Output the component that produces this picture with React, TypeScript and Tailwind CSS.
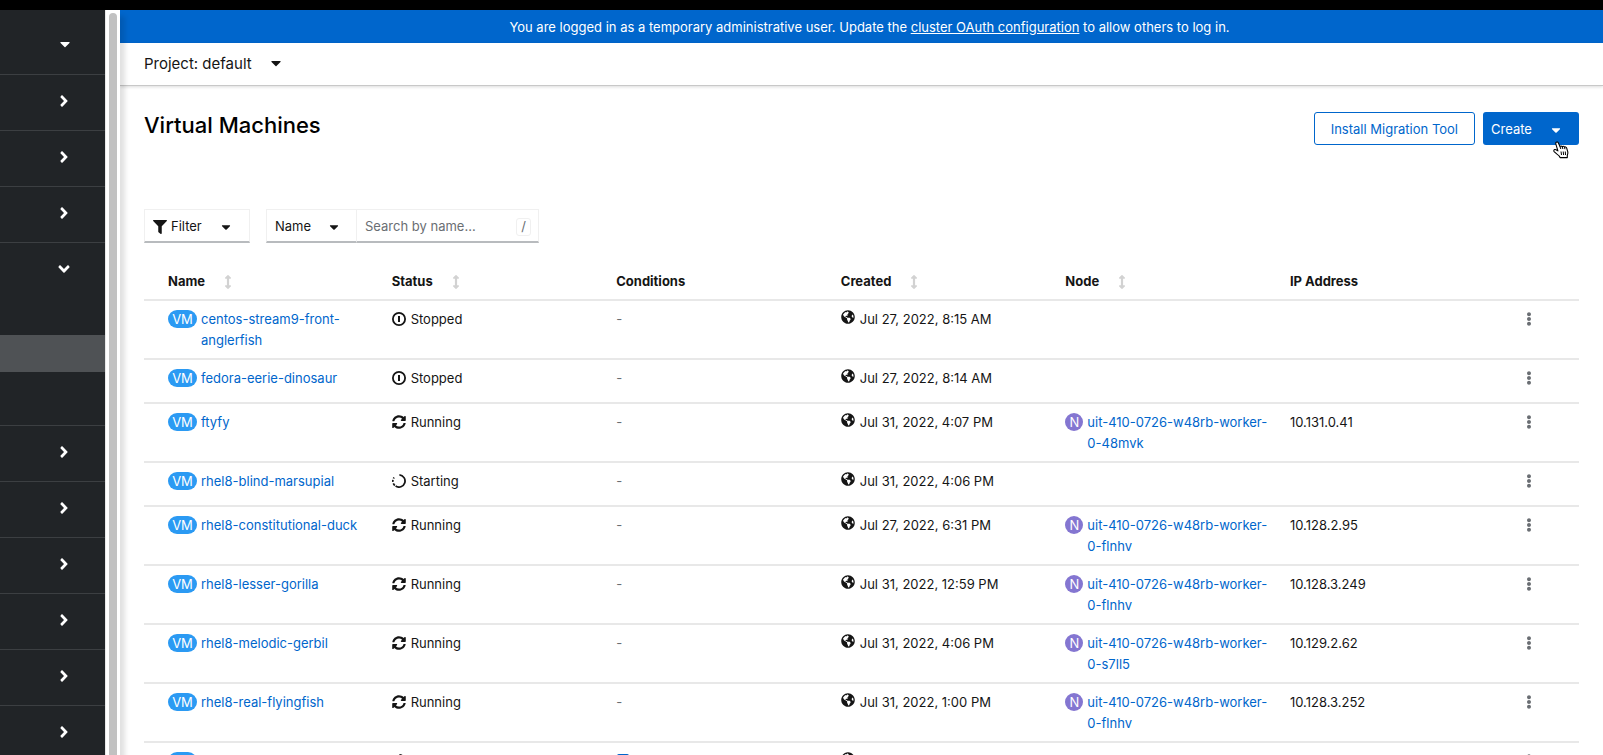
import { useState, type ReactNode } from 'react';
import {
  FaAngleDown,
  FaAngleRight,
  FaArrowsAltV,
  FaCaretDown,
  FaEllipsisV,
  FaFilter,
  FaGlobeAmericas,
  FaSyncAlt,
} from 'react-icons/fa';

type Status = 'Stopped' | 'Running' | 'Starting';

interface VirtualMachine {
  name: string;
  status: Status;
  flagged?: boolean;
  created: string;
  node?: string;
  ip?: string;
}

const machines: VirtualMachine[] = [
  { name: 'centos-stream9-front-anglerfish', status: 'Stopped', created: 'Jul 27, 2022, 8:15 AM' },
  { name: 'fedora-eerie-dinosaur', status: 'Stopped', created: 'Jul 27, 2022, 8:14 AM' },
  { name: 'ftyfy', status: 'Running', created: 'Jul 31, 2022, 4:07 PM', node: 'uit-410-0726-w48rb-worker-0-48mvk', ip: '10.131.0.41' },
  { name: 'rhel8-blind-marsupial', status: 'Starting', created: 'Jul 31, 2022, 4:06 PM' },
  { name: 'rhel8-constitutional-duck', status: 'Running', created: 'Jul 27, 2022, 6:31 PM', node: 'uit-410-0726-w48rb-worker-0-flnhv', ip: '10.128.2.95' },
  { name: 'rhel8-lesser-gorilla', status: 'Running', created: 'Jul 31, 2022, 12:59 PM', node: 'uit-410-0726-w48rb-worker-0-flnhv', ip: '10.128.3.249' },
  { name: 'rhel8-melodic-gerbil', status: 'Running', created: 'Jul 31, 2022, 4:06 PM', node: 'uit-410-0726-w48rb-worker-0-s7ll5', ip: '10.129.2.62' },
  { name: 'rhel8-real-flyingfish', status: 'Running', created: 'Jul 31, 2022, 1:00 PM', node: 'uit-410-0726-w48rb-worker-0-flnhv', ip: '10.128.3.252' },
  { name: '', status: 'Starting', created: '', flagged: true },
];

function StoppedIcon() {
  return (
    <svg viewBox="0 0 14 14" className="mt-[3px] size-[14px]" fill="none" stroke="currentColor" aria-hidden="true">
      <circle cx="7" cy="7" r="6.1" strokeWidth="1.8" />
      <path d="M7 4v6" strokeWidth="2" />
    </svg>
  );
}

function StartingIcon() {
  return (
    <svg viewBox="0 0 14 14" className="mt-[3px] size-[14px]" fill="none" stroke="currentColor" aria-hidden="true">
      <path d="M7.4 .9A6.1 6.1 0 1 1 3.6 12.1" strokeWidth="1.8" />
      <path d="M2.8 11.500A6.1 6.1 0 0 1 1.3 9.4M.9 7.800A6.1 6.1 0 0 1 .95 5.900M1.5 4.500A6.1 6.1 0 0 1 2.1 3.400" strokeWidth="1.7" />
    </svg>
  );
}

const statusIcons: Record<Status, ReactNode> = {
  Stopped: <StoppedIcon />,
  Running: <FaSyncAlt className="mt-[3px] size-[14px]" aria-hidden="true" />,
  Starting: <StartingIcon />,
};

function NavSection({ open = false }: { open?: boolean }) {
  return (
    <li className="border-b border-[#3c3f42]">
      <button type="button" aria-expanded={open} className="flex h-[55px] w-full items-center justify-end pr-8 pb-1 text-white">
        {open ? <FaAngleDown className="size-[18px]" /> : <FaAngleRight className="size-[18px]" />}
      </button>
      {open && (
        <ul className="pb-4">
          <li><a href="#" className="block h-[37px]" /></li>
          <li><a href="#" className="block h-[37px] bg-[#4f5255]" /></li>
          <li><a href="#" className="block h-[37px]" /></li>
        </ul>
      )}
    </li>
  );
}

function Sidebar() {
  return (
    <aside className="relative z-10 flex w-[120px] shrink-0 overflow-visible bg-white shadow-[5px_6px_5px_rgba(3,3,3,0.12)]">
      <nav className="h-full flex-1 overflow-hidden bg-[#212427]">
        <button type="button" className="flex h-[65px] w-full items-center justify-end border-b border-[#3c3f42] pt-1 pr-8 text-white">
          <FaCaretDown className="size-4" />
        </button>
        <ul>
          <NavSection />
          <NavSection />
          <NavSection />
          <NavSection open />
          <NavSection />
          <NavSection />
          <NavSection />
          <NavSection />
          <NavSection />
          <NavSection />
        </ul>
      </nav>
      <div className="flex w-[15px] overflow-hidden border-l border-[#e8e8e8] pt-[3px] pl-[3px]">
        <div className="h-full w-2 rounded-t-full bg-[#c1c1c1]" />
      </div>
    </aside>
  );
}

function HeaderCell({ label, sortable = false, className = '' }: { label: string; sortable?: boolean; className?: string }) {
  return (
    <th scope="col" className={`px-2 pt-1 text-left align-middle font-bold ${className}`}>
      {sortable ? (
        <button type="button" className="flex items-center gap-4">
          {label}
          <FaArrowsAltV className="size-[14px] text-[#d2d2d2]" aria-hidden="true" />
        </button>
      ) : (
        label
      )}
    </th>
  );
}

function ResourceLink({ kind, children }: { kind: 'VM' | 'N'; children: ReactNode }) {
  return (
    <span className="flex gap-1">
      <span
        className={
          kind === 'VM'
            ? 'mt-px flex h-[18px] w-[29px] shrink-0 items-center justify-center rounded-full bg-[#2b9af3] text-white'
            : 'mt-px flex size-[18px] shrink-0 items-center justify-center rounded-full bg-[#8476d1] text-white'
        }
      >
        {kind}
      </span>
      <a href="#" className="text-[#06c]">{children}</a>
    </span>
  );
}

function MachineRow({ vm }: { vm: VirtualMachine }) {
  return (
    <tr className="h-11 border-b-2 border-[#e8e8e8] align-top">
      <td className="pt-2 pr-2 pb-[7px] pl-6"><ResourceLink kind="VM">{vm.name}</ResourceLink></td>
      <td className="px-2 pt-2">
        <span className="flex gap-[5px]">{statusIcons[vm.status]}{vm.status}</span>
      </td>
      <td className="px-2 pt-2 text-[#6a6e73]">
        {vm.flagged ? <span className="mt-[3px] ml-px block h-[14px] w-3 rounded-[2px] bg-[#06c]" /> : '-'}
      </td>
      <td className="px-2 pt-2">
        <span className="flex gap-[5px]"><FaGlobeAmericas className="mt-px size-[14px]" aria-hidden="true" />{vm.created}</span>
      </td>
      <td className="px-2 pt-2 pb-[7px]">{vm.node && <ResourceLink kind="N">{vm.node}</ResourceLink>}</td>
      <td className="px-2 pt-2">{vm.ip}</td>
      <td className="px-4 pt-2">
        <button type="button" aria-label="Actions" className="flex h-5 w-[14px] items-center justify-center text-[#6a6e73]">
          <FaEllipsisV className="size-[14px]" />
        </button>
      </td>
    </tr>
  );
}

function HandCursor() {
  return (
    <svg viewBox="0 0 16 18" className="absolute top-[29px] right-[10px] h-[18px] w-4" aria-hidden="true">
      <path
        d="M3.2 1.2c.9-.6 1.8-.1 2.2.8L7 5.600c.3-.8 1.700-.9 2.200.1.5-.7 1.800-.6 2.200.4.7-.5 1.800-.2 2.200.8l1.200 4c.3 1.500-.2 2.500-.5 3.300v2.400H7.100c-.5-1.500-2-2.700-3.400-3.700L1.100 10.600c-.6-.8-.2-1.700.5-2 .8-.3 1.500 0 2.300.6l1 .7L2.800 2.900c-.2-.7-.1-1.300.4-1.700z"
        fill="#fff"
        stroke="#000"
        strokeWidth="1.100"
        strokeLinejoin="round"
      />
      <path d="M7 5.600l.8 2.400M9.200 5.800l.7 2.200M11.400 6.200l.6 2M8 10.500l.5 3.500M10.200 10.500l.4 3.500M12.300 10.500l.2 3.500" fill="none" stroke="#000" strokeWidth="1" />
    </svg>
  );
}

export default function App() {
  const [query, setQuery] = useState('');
  return (
    <div className="flex h-screen flex-col overflow-hidden bg-white font-[Inter,sans-serif] text-[13px] leading-[21px] text-[#151515]">
      <div className="h-[10px] shrink-0 bg-black" />
      <div className="flex min-h-0 flex-1">
        <Sidebar />
        <div className="flex min-w-0 flex-1 flex-col">
          <div className="flex h-[33px] shrink-0 items-center justify-center bg-[#06c] pt-0.5 pl-4 text-white">
            <p>
              You are logged in as a temporary administrative user. Update the{' '}
              <a href="#" className="underline">cluster OAuth configuration</a> to allow others to log in.
            </p>
          </div>
          <div className="z-[1] flex h-[43px] shrink-0 items-center border-b border-[#c8c8c8] pb-0.5 pl-6 shadow-[0_1px_3px_rgba(3,3,3,0.14)]">
            <button type="button" className="flex items-center gap-4 text-[15px]">
              Project: default <FaCaretDown className="size-4" />
            </button>
          </div>
          <main className="min-h-0 flex-1 overflow-hidden px-6 pt-[26px]">
            <div className="flex items-start justify-between">
              <h1 className="text-[22px] leading-[26px] font-medium text-black">Virtual Machines</h1>
              <div className="flex gap-2">
                <button type="button" className="h-[33px] rounded-[3px] border border-[#06c] px-4 pt-0.5 text-[#06c]">
                  Install Migration Tool
                </button>
                <div className="relative">
                  <button type="button" className="flex h-[33px] w-24 items-center justify-between rounded-[3px] bg-[#06c] pt-0.5 pr-4 pl-2 text-white">
                    Create <FaCaretDown className="size-[14px]" />
                  </button>
                  <HandCursor />
                </div>
              </div>
            </div>

            <div className="mt-16 flex gap-4">
              <button type="button" className="flex h-[34px] w-[106px] items-center border border-b-2 border-[#f0f0f0] border-b-[#b8bbbe] px-2 pt-0.5">
                <FaFilter className="mr-1 size-[14px]" aria-hidden="true" />
                <span className="flex-1 text-left">Filter</span>
                <FaCaretDown className="mr-2 size-[14px]" aria-hidden="true" />
              </button>
              <div className="flex">
                <button type="button" className="flex h-[34px] w-[91px] items-center justify-between border border-b-2 border-[#f0f0f0] border-b-[#b8bbbe] pt-0.5 pr-[15px] pl-2">
                  Name <FaCaretDown className="size-[14px]" aria-hidden="true" />
                </button>
                <label className="flex h-[34px] w-[182px] items-center border border-b-2 border-l-0 border-[#f0f0f0] border-b-[#b8bbbe] pt-0.5 pr-[7px] pl-2">
                  <input
                    type="text"
                    value={query}
                    onChange={(e) => setQuery(e.target.value)}
                    placeholder="Search by name..."
                    aria-label="Search by name"
                    className="min-w-0 flex-1 bg-transparent outline-none placeholder:text-[#6a6e73]"
                  />
                  <kbd className="flex h-[18px] w-[15px] items-center justify-center rounded-[3px] border border-[#f0f0f0] font-[Inter,sans-serif] text-[#6a6e73]">/</kbd>
                </label>
              </div>
            </div>

            <table className="mt-[17px] w-full table-fixed border-collapse">
              <thead>
                <tr className="h-10 border-b-2 border-[#e8e8e8]">
                  <HeaderCell label="Name" sortable className="w-[16.7%] pl-6" />
                  <HeaderCell label="Status" sortable className="w-[15.65%]" />
                  <HeaderCell label="Conditions" className="w-[15.65%]" />
                  <HeaderCell label="Created" sortable className="w-[15.65%]" />
                  <HeaderCell label="Node" sortable className="w-[15.65%]" />
                  <HeaderCell label="IP Address" className="w-[15.65%]" />
                  <td />
                </tr>
              </thead>
              <tbody>
                {machines.map((vm, index) => (
                  <MachineRow key={index} vm={vm} />
                ))}
              </tbody>
            </table>
          </main>
        </div>
      </div>
    </div>
  );
}
